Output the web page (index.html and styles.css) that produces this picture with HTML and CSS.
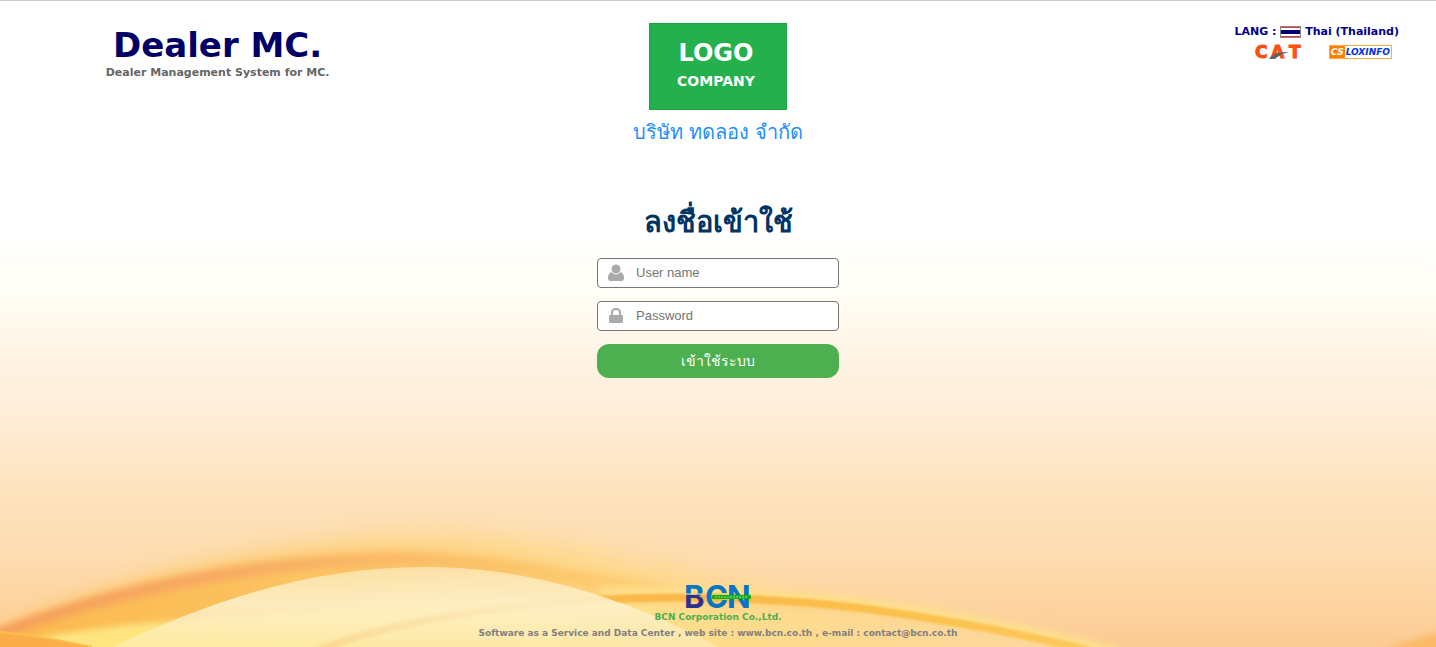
FILE: index.html
```html
<!DOCTYPE html>
<html lang="th">
<head>
  <meta charset="UTF-8">
  <meta name="viewport" content="width=device-width, initial-scale=1">
  <title>Dealer MC.</title>
  <link rel="stylesheet" href="styles.css">
</head>
<body>

  <!-- background waves -->
  <svg class="waves" viewBox="0 0 1436 150" preserveAspectRatio="none" aria-hidden="true">
    <defs>
      <filter id="soft" x="-10%" y="-50%" width="120%" height="200%"><feGaussianBlur stdDeviation="12"/></filter>
      <filter id="mid" x="-10%" y="-50%" width="120%" height="200%"><feGaussianBlur stdDeviation="7"/></filter>
      <filter id="thin" x="-10%" y="-50%" width="120%" height="200%"><feGaussianBlur stdDeviation="3"/></filter>
      <filter id="edge" x="-10%" y="-50%" width="120%" height="200%"><feGaussianBlur stdDeviation="1"/></filter>
      <linearGradient id="glow" x1="0" x2="1" y1="0" y2="0">
        <stop offset="0" stop-color="#fdcf84"/>
        <stop offset="0.5" stop-color="#fed98c"/>
        <stop offset="1" stop-color="#fddca0"/>
      </linearGradient>
      <linearGradient id="under" x1="0" x2="1" y1="0" y2="0">
        <stop offset="0" stop-color="#fbb84c"/>
        <stop offset="0.35" stop-color="#fcc566"/>
        <stop offset="0.55" stop-color="#fdd07a"/>
        <stop offset="1" stop-color="#fdd8a0"/>
      </linearGradient>
      <linearGradient id="ridge" gradientUnits="userSpaceOnUse" x1="0" x2="620" y1="0" y2="0">
        <stop offset="0" stop-color="#f5975a"/>
        <stop offset="0.3" stop-color="#f6a263"/>
        <stop offset="0.6" stop-color="#f9b466"/>
        <stop offset="1" stop-color="#fcc35c" stop-opacity="0.5"/>
      </linearGradient>
      <linearGradient id="low" gradientUnits="userSpaceOnUse" x1="40" x2="1040" y1="0" y2="0">
        <stop offset="0" stop-color="#fee57e"/>
        <stop offset="0.5" stop-color="#fee28a"/>
        <stop offset="0.7" stop-color="#fddb8c"/>
        <stop offset="1" stop-color="#fdd79c"/>
      </linearGradient>
      <linearGradient id="band" gradientUnits="userSpaceOnUse" x1="300" x2="1090" y1="0" y2="0">
        <stop offset="0" stop-color="#f9b250" stop-opacity="0.6"/>
        <stop offset="0.5" stop-color="#f9b844"/>
        <stop offset="1" stop-color="#fdc958"/>
      </linearGradient>
      <linearGradient id="hill" x1="0" x2="0" y1="0" y2="1">
        <stop offset="0" stop-color="#fdefc6" stop-opacity="0.65"/>
        <stop offset="0.45" stop-color="#fdf3d0" stop-opacity="0.85"/>
        <stop offset="1" stop-color="#fdf0c4" stop-opacity="0.5"/>
      </linearGradient>
    </defs>
    <path d="M-30 146C100 86 260 40 420 36C600 39 680 82 860 106C960 120 1050 140 1110 170L-30 170Z" fill="url(#glow)" filter="url(#soft)"/>
    <path d="M-20 143C110 86 240 57 400 54C500 54 570 74 700 92C860 112 980 130 1080 160L-20 160Z" fill="url(#under)" filter="url(#mid)"/>
    <path d="M-10 140C110 94 240 66 390 62C480 62 560 78 660 94" fill="none" stroke="url(#ridge)" stroke-width="12" filter="url(#thin)" opacity="0.8"/>
    <path d="M38 141C120 124 300 112 480 108C800 100 930 124 1060 158L60 158Z" fill="url(#low)" filter="url(#thin)"/>
    <path d="M600 95C780 93 900 102 1120 156" fill="none" stroke="#fedf8c" stroke-width="10" filter="url(#thin)"/>
    <path d="M320 152C480 95 700 92 860 111C940 122 1020 136 1090 154" fill="none" stroke="url(#band)" stroke-width="8" filter="url(#edge)"/>
    <path d="M113 150C210 104 310 70 425 70C540 70 640 108 718 150Z" fill="url(#hill)"/>
    <path d="M0 135C30 138 60 143 92 150L0 150Z" fill="#fbad4a"/>
    <path d="M0 135C30 138 60 143 92 150" fill="none" stroke="#fcc04a" stroke-width="2"/>
    <path d="M1380 154C1400 146 1420 141 1446 134L1446 154Z" fill="#fcb866" filter="url(#thin)"/>
  </svg>

  <header class="header">
    <div class="brand">
      <h1 class="brand-name">Dealer MC.</h1>
      <p class="brand-text">Dealer Management System for MC.</p>
    </div>

    <div class="company">
      <div class="company-logo">
        <span class="logo-big">LOGO</span>
        <span class="logo-small">COMPANY</span>
      </div>
      <p class="company-name">บริษัท ทดลอง จำกัด</p>
    </div>

    <div class="side">
      <a class="lang" href="#">LANG :
        <svg class="flag" viewBox="0 0 21 12" role="img" aria-label="TH">
          <rect width="21" height="12" fill="#888"/>
          <rect x="1" y="1" width="19" height="10" fill="#e0393e"/>
          <rect x="1" y="2" width="19" height="8" fill="#fff"/>
          <rect x="1" y="4" width="19" height="4" fill="#00007b"/>
        </svg>
        Thai (Thailand)</a>
      <div class="partners">
        <svg class="cat" viewBox="0 0 50 14" role="img" aria-label="CAT">
          <text class="cat-text" x="0 16 34" y="13">CAT</text>
          <path d="M14 14C18 8 26 7 34 7C27 9 23 11 20 14Z" fill="#606468"/>
        </svg>
        <span class="lox"><span class="lox-cs">CS</span><span class="lox-name">LOXINFO</span></span>
      </div>
    </div>
  </header>

  <main class="login">
    <h2 class="login-title">ลงชื่อเข้าใช้</h2>
    <form class="login-form">
      <label class="field">
        <svg class="field-icon" viewBox="0 0 16 16" aria-label="User name">
          <path d="M4 7Q8 10 12 7Q16 8 16 13Q16 16 13 16H3Q0 16 0 13Q0 8 4 7Z" fill="#aaa"/>
          <ellipse cx="8" cy="4" rx="5" ry="5" fill="#aaa" stroke="#fff" stroke-width="1"/>
        </svg>
        <input type="text" name="username" placeholder="User name">
      </label>
      <label class="field">
        <svg class="field-icon" viewBox="0 0 16 16" aria-label="Password">
          <path d="M4 8V5Q4 1 8 1Q12 1 12 5V8" fill="none" stroke="#aaa" stroke-width="2"/>
          <rect x="1" y="7" width="14" height="8" rx="1" fill="#aaa"/>
        </svg>
        <input type="password" name="password" placeholder="Password">
      </label>
      <button class="login-button" type="submit">เข้าใช้ระบบ</button>
    </form>
  </main>

  <footer class="footer">
    <svg class="bcn" viewBox="0 0 66 24" role="img" aria-label="BCN">
      <defs>
        <linearGradient id="letters" gradientUnits="userSpaceOnUse" x1="0" y1="0" x2="0" y2="24">
          <stop offset="0.4" stop-color="#0874c4"/>
          <stop offset="0.4" stop-color="#2e3192"/>
        </linearGradient>
      </defs>
      <text class="bcn-text" x="-1 20 42" y="23"><tspan fill="url(#letters)">B</tspan>CN</text>
      <path d="M0 9H19" stroke="#fddf96" stroke-width="1"/>
      <rect x="27" y="10" width="39" height="4" rx="1" fill="#06b40e"/>
      <path d="M30 12H62" stroke="#8fe08f" stroke-width="1" stroke-dasharray="2 1"/>
    </svg>
    <p class="footer-company">BCN Corporation Co.,Ltd.</p>
    <p class="footer-info">Software as a Service and Data Center , web site : <a href="#">www.bcn.co.th</a> , e-mail : <a href="#">contact@bcn.co.th</a></p>
  </footer>

</body>
</html>
```
FILE: styles.css
```css
* {
  box-sizing: border-box;
}
body {
  margin: 0;
  min-height: 100vh;
  display: flex;
  flex-direction: column;
  position: relative;
  border-top: 1px solid #ccc;
  font-family: "DejaVu Sans", Verdana, sans-serif;
  font-weight: bold;
  background: linear-gradient(#fff 36%, #fffdf3 46%, #fff3e3 56%, #ffeedb 62%, #fee4c0 75%, #fddcb0 86%, #fdd39f 94%, #fccb94);
}
h1, h2, p {
  margin: 0;
}
a {
  color: inherit;
  text-decoration: none;
}
.waves {
  position: absolute;
  left: 0;
  bottom: 0;
  width: 100%;
  height: 150px;
  z-index: -1;
}

.header {
  display: grid;
  grid-template-columns: 1fr 1.3fr 1fr;
}
.brand {
  padding-top: 24px;
  text-align: center;
}
.brand-name {
  font-size: 34px;
  line-height: 40px;
  color: #006;
}
.brand-text {
  font-size: 11px;
  line-height: 16px;
  color: #666;
}
.company {
  display: flex;
  flex-direction: column;
  align-items: center;
  padding-top: 22px;
}
.company-logo {
  display: flex;
  flex-direction: column;
  align-items: center;
  width: 138px;
  height: 87px;
  padding: 15px 4px 0 0;
  border: 1px solid #1aa544;
  background: #24b14d;
  color: #fff;
}
.logo-big {
  font-size: 24px;
  line-height: 28px;
}
.logo-small {
  font-size: 14px;
  line-height: 28px;
}
.company-name {
  font-size: 20px;
  line-height: 44px;
  font-weight: normal;
  color: #1e90ff;
}
.side {
  display: flex;
  flex-direction: column;
  align-items: flex-end;
  padding: 24px 37px 0 0;
}
.lang {
  font-size: 11px;
  line-height: 14px;
  color: #00008b;
}
.flag {
  width: 21px;
  height: 12px;
  vertical-align: middle;
}
.partners {
  display: flex;
  align-items: center;
  gap: 24px;
  padding: 6px 7px 0 0;
}
.cat {
  width: 50px;
  height: 14px;
  overflow: visible;
}
.cat-text {
  font-size: 17px;
  fill: #fc5012;
  stroke: #fc5012;
  stroke-width: 1px;
}
.lox {
  display: flex;
  height: 14px;
  border: 1px solid #f7a94d;
  background: #fff;
  font-size: 9px;
  line-height: 12px;
  font-style: italic;
}
.lox-cs {
  padding: 0 1px;
  background: #ff8000;
  color: #fff;
}
.lox-name {
  padding: 0 1px;
  color: #0033e0;
}

.login {
  display: flex;
  flex-direction: column;
  align-items: center;
  padding-top: 46px;
}
.login-title {
  font-size: 29px;
  line-height: 44px;
  color: #036;
}
.login-form {
  display: flex;
  flex-direction: column;
  gap: 13px;
  width: 242px;
  padding-top: 14px;
}
.field {
  display: flex;
  align-items: center;
  gap: 12px;
  height: 30px;
  padding: 0 10px;
  border: 1px solid #767676;
  border-radius: 4px;
  background: #fff;
}
.field-icon {
  flex: none;
  width: 16px;
  height: 16px;
  overflow: visible;
}
.field input {
  flex: 1;
  min-width: 0;
  padding: 0 0 2px;
  border: 0;
  outline: 0;
  background: transparent;
  font-family: "Liberation Sans", Arial, sans-serif;
  font-size: 13px;
}
.login-button {
  height: 34px;
  border: 0;
  border-radius: 12px;
  background: #4caf50;
  color: #fff;
  font-family: inherit;
  font-size: 14px;
  cursor: pointer;
}

.footer {
  display: flex;
  flex-direction: column;
  align-items: center;
  margin-top: auto;
  padding-bottom: 6px;
  text-align: center;
}
.bcn {
  width: 66px;
  height: 24px;
  overflow: visible;
}
.bcn-text {
  font-family: Inter, "DejaVu Sans", sans-serif;
  font-size: 31px;
  font-weight: bold;
  fill: #0874c4;
}
.footer-company {
  font-size: 9px;
  line-height: 16px;
  color: #4caf50;
}
.footer-info {
  font-size: 9px;
  line-height: 16px;
  color: #808080;
}
```
